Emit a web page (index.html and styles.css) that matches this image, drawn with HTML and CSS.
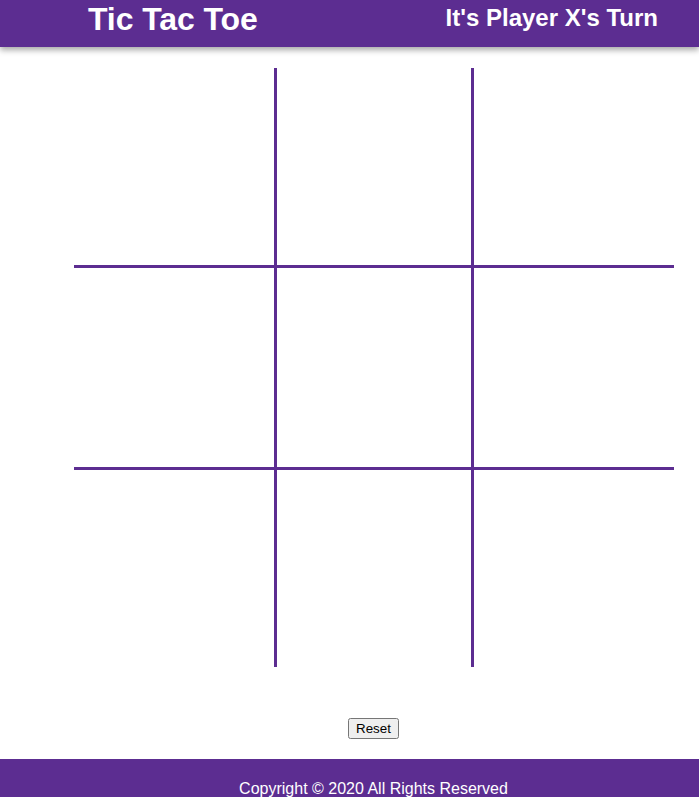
FILE: index.html
```html
<!DOCTYPE html>
<html>
<head>
<meta charset="utf-8">
<link rel="stylesheet" href="styles.css">
</head>
<body>
<header class="topbar">
  <h1 class="title">Tic Tac Toe</h1>
  <h2 class="turn">It's Player X's Turn</h2>
</header>
<main class="content">
  <div class="board">
    <div class="cell"></div>
    <div class="cell col-mid"></div>
    <div class="cell"></div>
    <div class="cell row-mid"></div>
    <div class="cell row-mid col-mid"></div>
    <div class="cell row-mid"></div>
    <div class="cell"></div>
    <div class="cell col-mid"></div>
    <div class="cell"></div>
  </div>
  <div class="controls">
    <button class="reset">Reset</button>
  </div>
</main>
<footer class="footer">
  <p class="copy">Copyright © 2020 All Rights Reserved</p>
</footer>
</body>
</html>
```
FILE: styles.css
```css
html, body {
  margin: 0;
  padding: 0;
  background: #ffffff;
  font-family: "Liberation Sans", Arial, sans-serif;
}
.topbar {
  height: 47px;
  background: #5c2d91;
  color: #ffffff;
  display: flex;
  justify-content: space-between;
  align-items: flex-start;
  padding: 0 41px 0 88px;
  box-shadow: 0 3px 6px rgba(0, 0, 0, 0.35);
  position: relative;
}
.title {
  margin: 0;
  font-size: 32px;
  font-weight: bold;
  line-height: 36px;
  padding-top: 1px;
  letter-spacing: -0.1px;
}
.turn {
  margin: 0;
  font-size: 24px;
  font-weight: bold;
  line-height: 26px;
  padding-top: 5px;
}
.content {
  padding-top: 21px;
}
.board {
  margin-left: 74px;
  width: 600px;
  display: grid;
  grid-template-columns: 200px 200px 200px;
  grid-template-rows: 197px 205px 197px;
}
.cell {
  box-sizing: border-box;
}
.col-mid {
  border-left: 3px solid #5c2d91;
  border-right: 3px solid #5c2d91;
}
.row-mid {
  border-top: 3px solid #5c2d91;
  border-bottom: 3px solid #5c2d91;
}
.controls {
  display: flex;
  justify-content: center;
  padding-left: 48px;
  padding-top: 51px;
  padding-bottom: 20px;
}
.reset {
  font-family: "Liberation Sans", Arial, sans-serif;
  font-size: 13.333px;
  padding: 1px 6px;
  height: 21px;
}
.footer {
  background: #5c2d91;
  color: #ffffff;
  padding: 21px 0 0 48px;
  text-align: center;
}
.copy {
  margin: 0;
  font-size: 16px;
  line-height: 18px;
}
```
